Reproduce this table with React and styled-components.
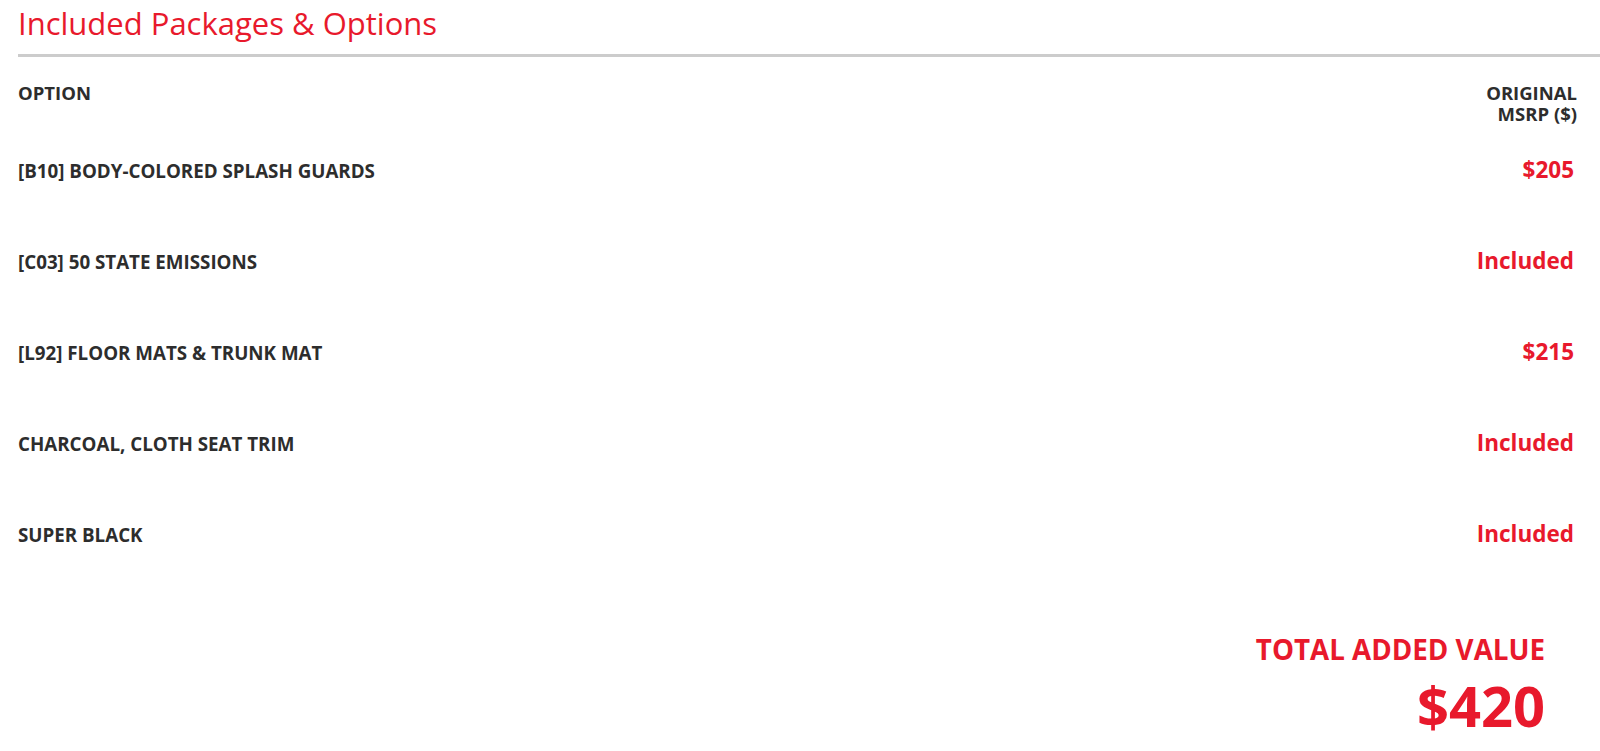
import React from "react";
import styled, { createGlobalStyle } from "styled-components";

const Global = createGlobalStyle`
  html, body { margin: 0; padding: 0; background: #fff; }
  body { font-family: "Open Sans", "Liberation Sans", sans-serif; color: #2d2d2d; }
`;

const Page = styled.div`
  padding: 0 0 0 18px;
`;

const Title = styled.h2`
  margin: 0;
  padding: 2px 0 10px;
  font-size: 31px;
  font-weight: 400;
  line-height: 42px;
  color: #e8192c;
  border-bottom: 3px solid #cccccc;
`;

const Table = styled.div`
  margin-right: 23px;
  margin-top: 25px;
`;

const HeadRow = styled.div`
  display: flex;
  justify-content: space-between;
  align-items: flex-start;
  margin-bottom: 33px;
  font-size: 18.5px;
  font-weight: 700;
  line-height: 21px;
  text-transform: uppercase;
  color: #2d2d2d;
`;

const HeadRight = styled.div`
  text-align: right;
`;

const Row = styled.div`
  display: flex;
  justify-content: space-between;
  align-items: baseline;
  height: 91px;
  line-height: 26px;
`;

const Name = styled.div`
  font-size: 18.75px;
  font-weight: 700;
  text-transform: uppercase;
  color: #2d2d2d;
`;

const Price = styled.div`
  font-size: 22.5px;
  font-weight: 700;
  color: #e8192c;
  padding-right: 3px;
`;

const Total = styled.div`
  display: flex;
  flex-direction: column;
  align-items: flex-end;
  margin: 19px 55px 0 0;
  color: #e8192c;
  font-weight: 700;
  text-transform: uppercase;
`;

const TotalLabel = styled.div`
  font-size: 27.75px;
  line-height: 36px;
`;

const TotalValue = styled.div`
  margin-top: 6px;
  font-size: 56px;
  line-height: 64px;
`;

const rows = [
  ["[B10] Body-Colored Splash Guards", "$205"],
  ["[C03] 50 State Emissions", "Included"],
  ["[L92] Floor Mats & Trunk Mat", "$215"],
  ["Charcoal, Cloth Seat Trim", "Included"],
  ["Super Black", "Included"],
];

export default function App() {
  return (
    <Page>
      <Global />
      <Title>Included Packages &amp; Options</Title>
      <Table>
        <HeadRow>
          <div>Option</div>
          <HeadRight>
            Original
            <br />
            MSRP ($)
          </HeadRight>
        </HeadRow>
        {rows.map(([n, p]) => (
          <Row key={n}>
            <Name>{n}</Name>
            <Price>{p}</Price>
          </Row>
        ))}
      </Table>
      <Total>
        <TotalLabel>Total Added Value</TotalLabel>
        <TotalValue>$420</TotalValue>
      </Total>
    </Page>
  );
}
